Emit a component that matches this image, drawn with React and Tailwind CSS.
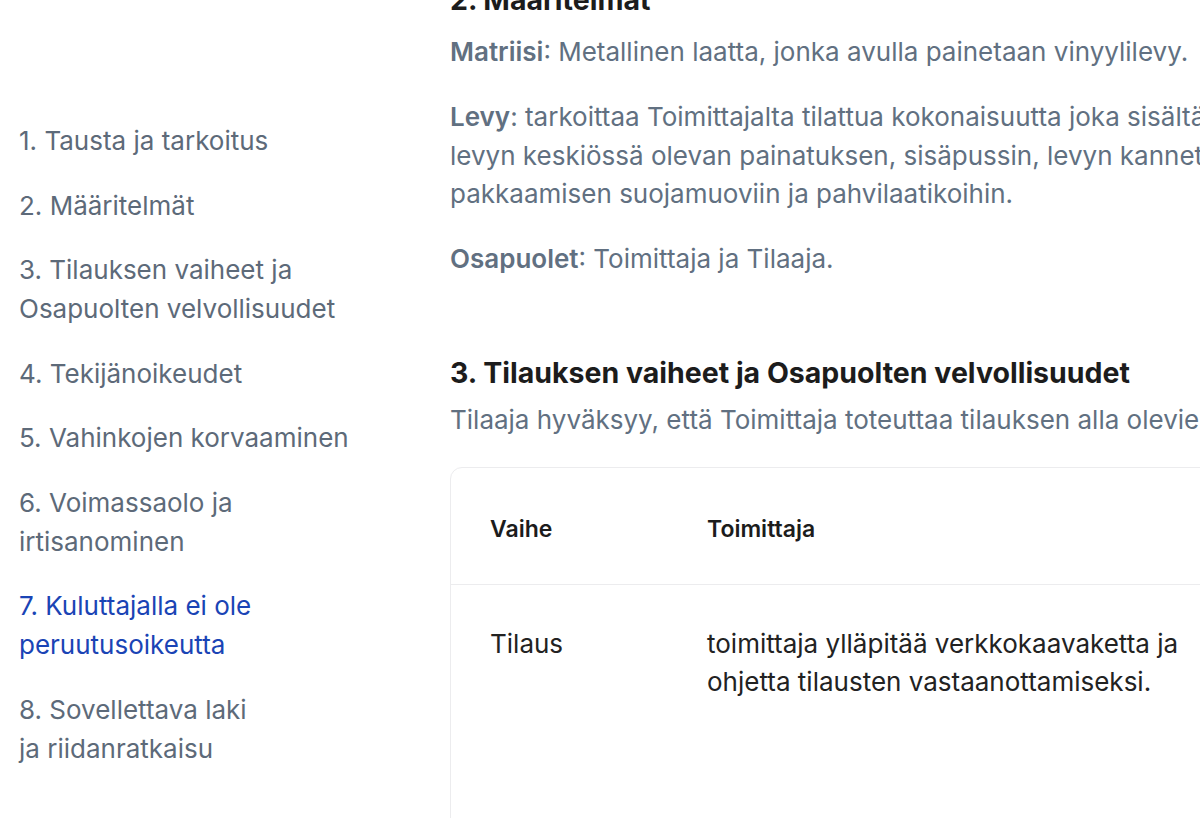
import React from "react";

const sections = [
  { id: 1, label: "1. Tausta ja tarkoitus" },
  { id: 2, label: "2. Määritelmät" },
  { id: 3, label: "3. Tilauksen vaiheet ja Osapuolten velvollisuudet" },
  { id: 4, label: "4. Tekijänoikeudet" },
  { id: 5, label: "5. Vahinkojen korvaaminen" },
  { id: 6, label: "6. Voimassaolo ja irtisanominen" },
  { id: 7, label: "7. Kuluttajalla ei ole peruutusoikeutta", active: true },
  { id: 8, label: ["8. Sovellettava laki", "ja riidanratkaisu"] },
];

const Sidebar = () => (
  <nav className="w-[450px] shrink-0 pl-[19px] pr-[100px] pt-[121px] flex flex-col gap-[25.5px] text-[26px] leading-[39px]">
    {sections.map((s) => (
      <a
        key={s.id}
        href={`#section-${s.id}`}
        className={s.active ? "text-[#1a44b5]" : "text-[#5d6a79]"}
      >
        {Array.isArray(s.label) ? (
          <>
            {s.label[0]}
            <br />
            {s.label[1]}
          </>
        ) : (
          s.label
        )}
      </a>
    ))}
  </nav>
);

const Definition = ({ term, children, className = "" }) => (
  <p className={`text-[26px] leading-[38.5px] text-[#617081] ${className}`}>
    <span className="font-semibold">{term}</span>: {children}
  </p>
);

const StepsTable = () => (
  <div className="mt-[28px] w-[1100px] rounded-xl border border-[#ececee] h-[560px] shrink-0">
    <div className="flex border-b border-[#ececee] pt-[46px] pb-[40px] text-[23px] leading-[30px] font-semibold text-[#1c1c1c]">
      <div className="w-[256px] shrink-0 pl-[39px]">Vaihe</div>
      <div className="w-[500px] shrink-0">Toimittaja</div>
      <div>Tilaaja</div>
    </div>
    <div className="flex pt-[40px] text-[26px] leading-[38px] text-[#222]">
      <div className="w-[256px] shrink-0 pl-[39px]">Tilaus</div>
      <div className="w-[500px] shrink-0 pr-[20px]">
        toimittaja ylläpitää verkkokaavaketta ja ohjetta tilausten vastaanottamiseksi.
      </div>
      <div>tilaaja täyttää verkkokaavakkeen.</div>
    </div>
  </div>
);

export default function App() {
  return (
    <div
      className="w-[1200px] h-[818px] overflow-hidden bg-white flex"
      style={{ fontFamily: "Inter, 'Noto Sans', sans-serif" }}
    >
      <Sidebar />
      <main className="w-[1100px] shrink-0 flex flex-col">
        <h2 className="-mt-[18px] text-[28.5px] leading-[36px] font-bold text-[#1c1c1c] whitespace-nowrap">
          2. Määritelmät
        </h2>
        <Definition term="Matriisi" className="mt-[15px] whitespace-nowrap">
          Metallinen laatta, jonka avulla painetaan vinyylilevy.
        </Definition>
        <Definition term="Levy" className="mt-[26.5px] whitespace-nowrap">
          tarkoittaa Toimittajalta tilattua kokonaisuutta joka sisältää vinyylilevyn,
          <br />
          levyn keskiössä olevan painatuksen, sisäpussin, levyn kannet sekä levyjen
          <br />
          pakkaamisen suojamuoviin ja pahvilaatikoihin.
        </Definition>
        <Definition term="Osapuolet" className="mt-[26.5px]">
          Toimittaja ja Tilaaja.
        </Definition>

        <h2 className="mt-[76px] text-[28.5px] leading-[36px] font-bold text-[#1c1c1c] whitespace-nowrap">
          3. Tilauksen vaiheet ja Osapuolten velvollisuudet
        </h2>
        <p className="mt-[10px] text-[26px] leading-[38.5px] text-[#617081] whitespace-nowrap">
          Tilaaja hyväksyy, että Toimittaja toteuttaa tilauksen alla olevien vaiheiden mukaisesti.
        </p>
        <StepsTable />
      </main>
    </div>
  );
}
